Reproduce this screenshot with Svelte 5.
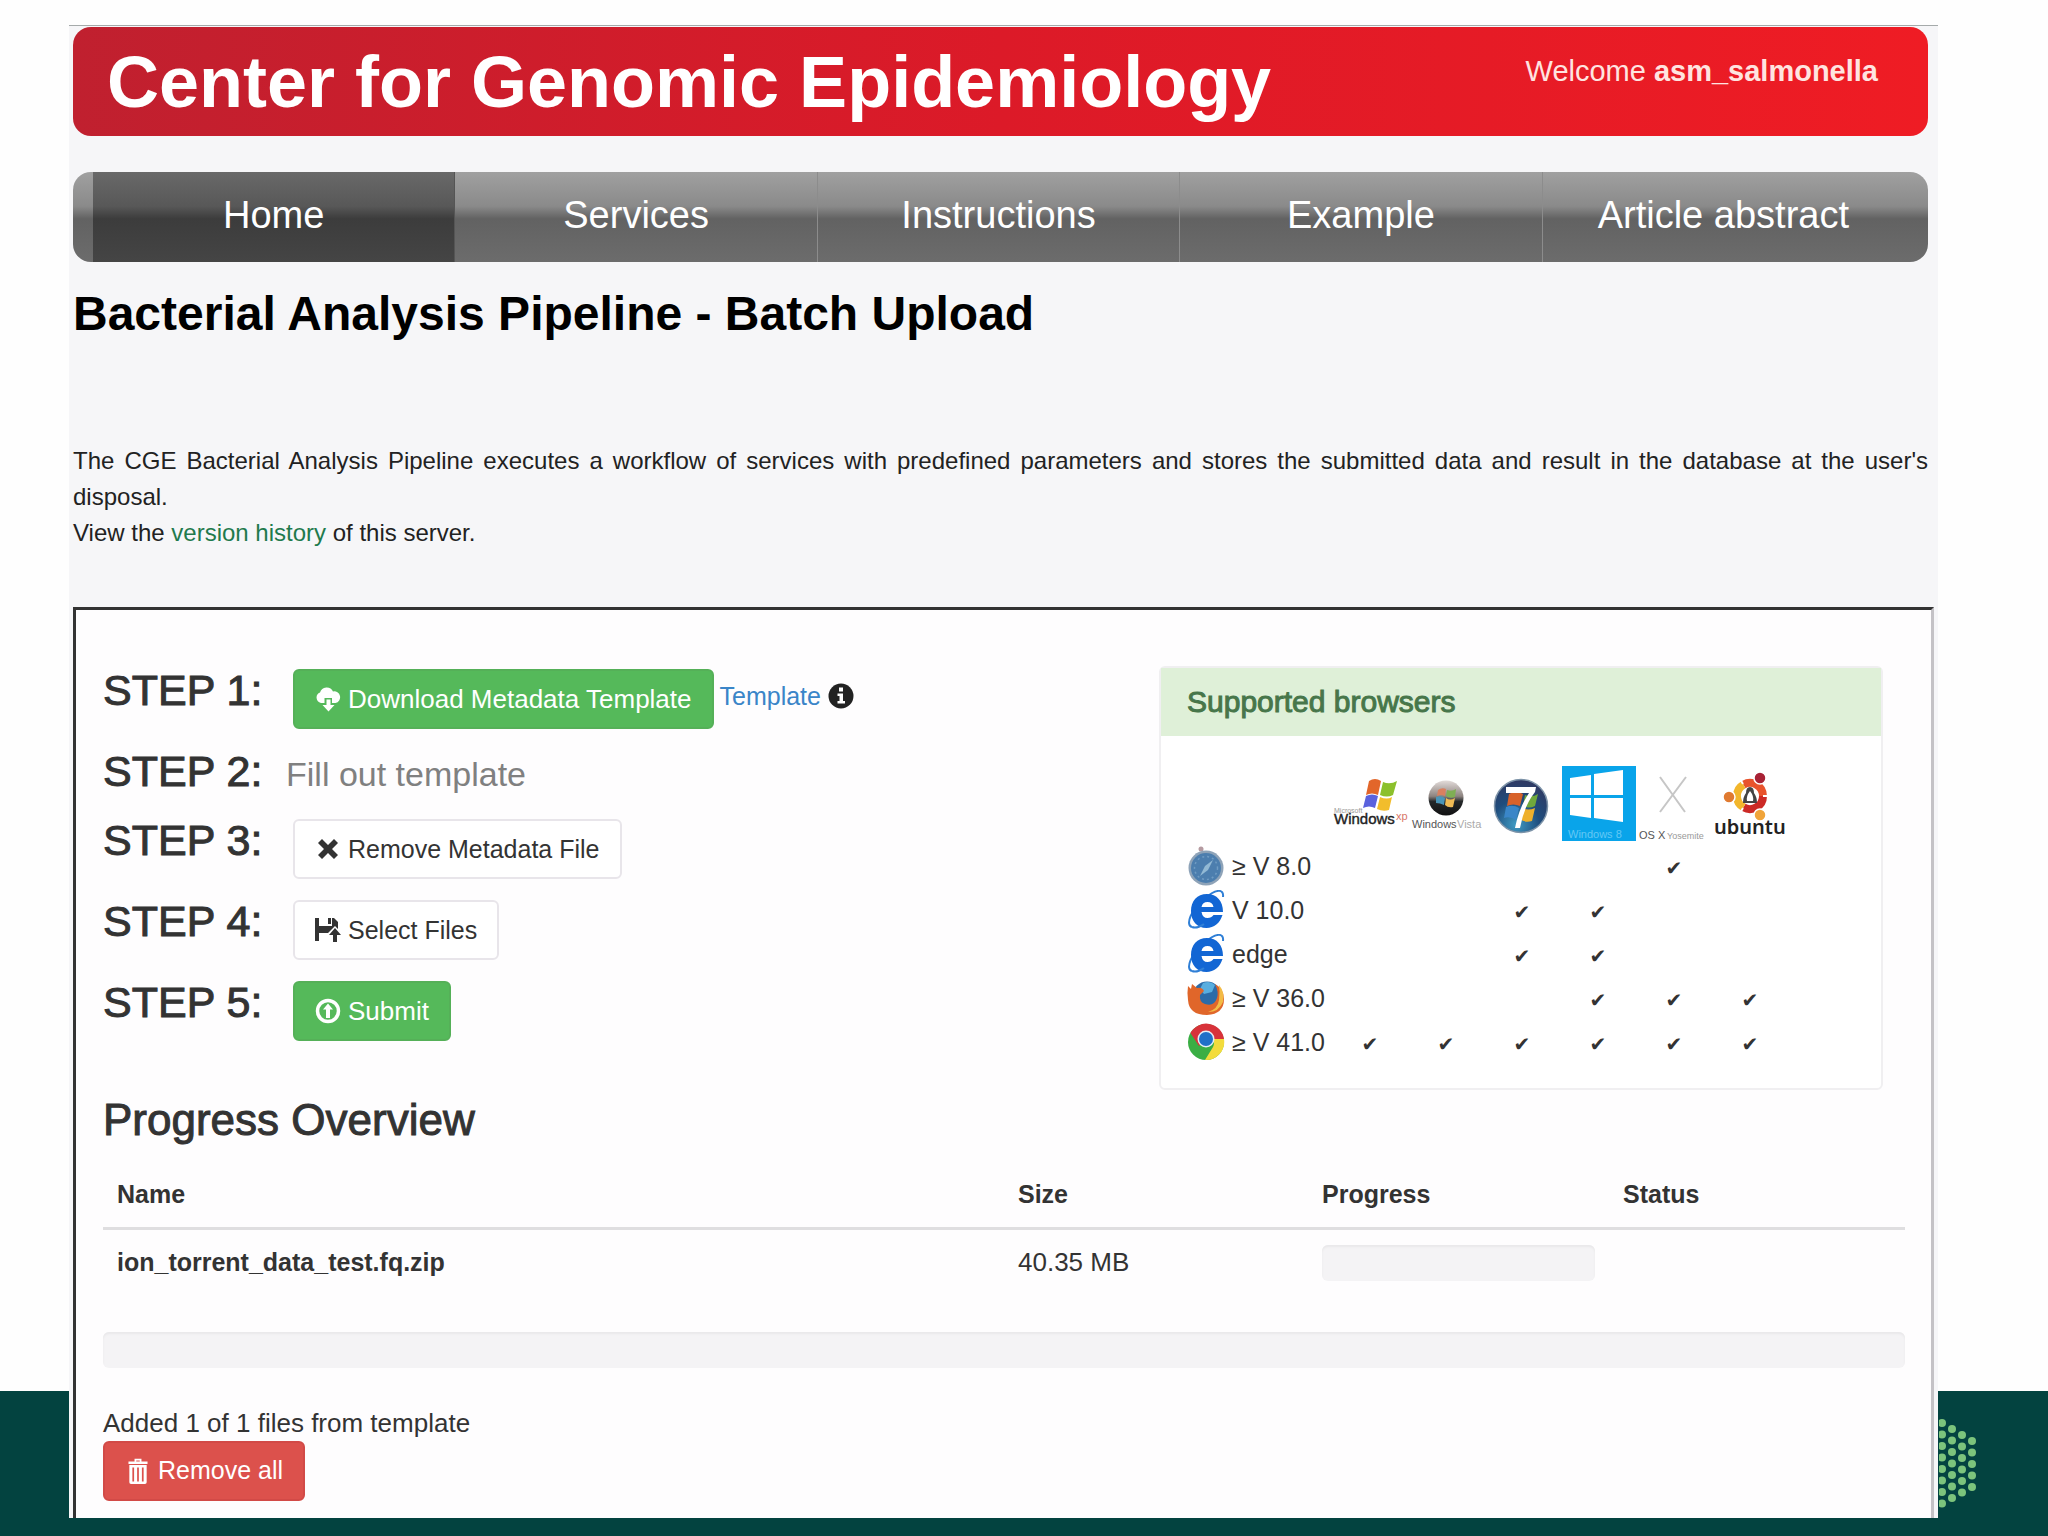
<script>
    const nav = ["Home", "Services", "Instructions", "Example", "Article abstract"];

    // one flag per operating system, in the order of the table head
    const browsers = [
        { icon: "safari", label: "≥ V 8.0", support: [0, 0, 0, 0, 1, 0] },
        { icon: "ie", label: "V 10.0", support: [0, 0, 1, 1, 0, 0] },
        { icon: "ie", label: "edge", support: [0, 0, 1, 1, 0, 0] },
        { icon: "firefox", label: "≥ V 36.0", support: [0, 0, 0, 1, 1, 1] },
        { icon: "chrome", label: "≥ V 41.0", support: [1, 1, 1, 1, 1, 1] },
    ];

    const files = [{ name: "ion_torrent_data_test.fq.zip", size: "40.35 MB", progress: 0 }];

    // columns of the hexagon: x, first y, number of dots
    const dots = [
        [3, 6, 8],
        [13, 12, 7],
        [23, 18, 6],
        [33, 24, 5],
    ].flatMap(([x, y, n]) => Array.from({ length: n }, (_, i) => ({ x, y: y + i * 11.5 })));
</script>

<div class="slide">
    <svg class="dots" viewBox="0 0 40 94" aria-hidden="true">
        {#each dots as dot}
            <circle cx={dot.x} cy={dot.y} r="4" />
        {/each}
    </svg>

    <div class="sheet">
        <header class="banner">
            <h1>Center for Genomic Epidemiology</h1>
            <div class="welcome">Welcome <b>asm_salmonella</b></div>
        </header>

        <nav>
            {#each nav as item, i}
                <a href="#{i}" class:active={i === 0}>{item}</a>
            {/each}
        </nav>

        <h2 class="title">Bacterial Analysis Pipeline - Batch Upload</h2>

        <p class="intro">
            The CGE Bacterial Analysis Pipeline executes a workflow of services with predefined
            parameters and stores the submitted data and result in the database at the user's
            disposal.<br />
            View the <a href="#history">version history</a> of this server.
        </p>

        <main>
            <div class="top">
                <div class="steps">
                    <div class="step">
                        <h3>STEP 1:</h3>
                        <button class="btn green">
                            <svg viewBox="0 0 26 26">
                                <path d="M6 17a5.5 5.5 0 0 1-1-10.5A7 7 0 0 1 18 5.5a5.8 5.8 0 0 1 2.5 11.5H17v-5H9.5v5z" />
                                <path d="M11.5 13.5h4V19h4l-6 6.5-6-6.5h4z" />
                            </svg>
                            Download Metadata Template
                        </button>
                        <a class="template" href="#template">
                            Template
                            <svg viewBox="0 0 26 26">
                                <circle cx="13" cy="13" r="12.5" fill="#222" />
                                <path d="M11 4.5h4v4h-4zM9.5 10.5H15V18h2v2.5H9.5V18h2v-5h-2z" fill="#fff" />
                            </svg>
                        </a>
                    </div>
                    <div class="step">
                        <h3>STEP 2:</h3>
                        <span class="hint">Fill out template</span>
                    </div>
                    <div class="step">
                        <h3>STEP 3:</h3>
                        <button class="btn">
                            <svg viewBox="0 0 26 26">
                                <path d="M3 7l4-4 6 6 6-6 4 4-6 6 6 6-4 4-6-6-6 6-4-4 6-6z" />
                            </svg>
                            Remove Metadata File
                        </button>
                    </div>
                    <div class="step">
                        <h3>STEP 4:</h3>
                        <button class="btn">
                            <svg viewBox="0 0 26 26">
                                <path d="M0 1h4v8h13V1h2l4 4v7l-3-3-7 7H4v8H0z" />
                                <path d="M13 1h3v6h-3zM20 11l6 7h-4v7h-4v-7h-4z" />
                            </svg>
                            Select Files
                        </button>
                    </div>
                    <div class="step">
                        <h3>STEP 5:</h3>
                        <button class="btn green">
                            <svg viewBox="0 0 26 26">
                                <circle cx="13" cy="13" r="10.5" fill="none" stroke="currentColor" stroke-width="3.5" />
                                <path d="M13 5.5l5 6h-3V20h-4v-8.5H8z" />
                            </svg>
                            Submit
                        </button>
                    </div>
                </div>

                <section class="browsers">
                    <h4>Supported browsers</h4>
                    <table>
                        <thead>
                            <tr>
                                <td></td>
                                <th scope="col">
                                    <svg class="os" viewBox="0 0 76 80">
                                        <path d="M37 17q6-4 12 0l-3 14q-6-3-12 0z" fill="#e2662a" />
                                        <path d="M51 18q7 3 14-1l-4 14q-6 3-13 0z" fill="#8cc02c" />
                                        <path d="M34 32q6-3 12 0l-3 12q-6-3-12 0z" fill="#5a62dd" />
                                        <path d="M48 33q7 3 12 0l-3 13q-6 2-12-1z" fill="#f2bd2c" />
                                        <text x="2" y="49" font-size="7" fill="#999">Microsoft</text>
                                        <text x="2" y="60" font-size="15" fill="#222" stroke="#222" stroke-width="0.4">Windows</text>
                                        <text x="64" y="56" font-size="11" fill="#d9776a">xp</text>
                                    </svg>
                                </th>
                                <th scope="col">
                                    <svg class="os" viewBox="0 0 76 80">
                                        <defs>
                                            <linearGradient id="vista" x1="0" y1="0" x2="0" y2="1">
                                                <stop offset="0" stop-color="#e3dcda" />
                                                <stop offset="0.45" stop-color="#8d8480" />
                                                <stop offset="0.6" stop-color="#25282a" />
                                                <stop offset="1" stop-color="#111" />
                                            </linearGradient>
                                        </defs>
                                        <circle cx="38" cy="34" r="17.5" fill="url(#vista)" />
                                        <path d="M30 26q4-3 8-1l-1 7q-4-2-8 0z" fill="#d9805f" />
                                        <path d="M39 26q5 2 9-1l-1 8q-5 2-9-1z" fill="#7fae54" />
                                        <path d="M28 33q5-2 9 1l-1 7q-4-2-8-2z" fill="#4a95b8" />
                                        <path d="M38 34q4 3 9 0l-2 9q-5 1-8-2z" fill="#f0bb55" />
                                        <text x="4" y="64" font-size="11" fill="#555">Windows</text>
                                        <text x="49" y="64" font-size="11" fill="#aaa">Vista</text>
                                    </svg>
                                </th>
                                <th scope="col">
                                    <svg class="os" viewBox="0 0 76 80">
                                        <defs>
                                            <radialGradient id="seven" cx="0.4" cy="0.85" r="0.9">
                                                <stop offset="0" stop-color="#3f9bc4" />
                                                <stop offset="0.5" stop-color="#1f4d7d" />
                                                <stop offset="1" stop-color="#33375f" />
                                            </radialGradient>
                                        </defs>
                                        <circle cx="37" cy="42" r="26.5" fill="url(#seven)" stroke="#7d93a8" stroke-width="1.5" />
                                        <path d="M25 30q7-4 14 0l-3 12q-7-3-13 0z" fill="#d8622a" />
                                        <path d="M41 31q7 3 13-1l-3 12q-6 3-12 0z" fill="#6fa83c" />
                                        <path d="M22 43q7-3 13 1l-3 12q-6-4-12-2z" fill="#3a86c8" />
                                        <path d="M38 44q6 3 13 0l-3 13q-7 2-12-2z" fill="#eeb02c" />
                                        <path d="M22 23h30l-1 5q-11 14-15 36h-5q4-20 14-35H22z" fill="#fff" />
                                    </svg>
                                </th>
                                <th scope="col">
                                    <svg class="os" viewBox="0 0 76 80">
                                        <rect x="2" y="2" width="74" height="75" fill="#09a4ea" />
                                        <path d="M10 14l21-3v20H10zM34 10l29-4v25H34zM10 34h21v20l-21-3zM34 34h29v24l-29-4z" fill="#fff" />
                                        <text x="8" y="74" font-size="11" fill="#63c8f5">Windows 8</text>
                                    </svg>
                                </th>
                                <th scope="col">
                                    <svg class="os" viewBox="0 0 76 80">
                                        <path d="M24 13l25 35M50 13L24 48" stroke="#c6c6c6" stroke-width="2" />
                                        <text x="3" y="75" font-size="11" fill="#555">OS X</text>
                                        <text x="31" y="75" font-size="9" fill="#999">Yosemite</text>
                                    </svg>
                                </th>
                                <th scope="col">
                                    <svg class="os" viewBox="0 0 76 80">
                                        <g fill="none" stroke-width="8">
                                            <path d="M31.5 20.7A13 13 0 0 1 51 32" stroke="#e8532c" />
                                            <path d="M51 32A13 13 0 0 1 31.5 43.3" stroke="#cc2a26" />
                                            <path d="M31.5 43.3A13 13 0 0 1 31.5 20.7" stroke="#f2b62c" />
                                        </g>
                                        <path d="M31 20l-3-5M31 44l-3 5M51 32h7" stroke="#fff" stroke-width="2" />
                                        <g stroke="#fff" stroke-width="1.5">
                                            <circle cx="17" cy="33" r="6" fill="#e07a30" />
                                            <circle cx="48" cy="14" r="6" fill="#a82235" />
                                            <circle cx="48" cy="51" r="6" fill="#f0a43a" />
                                        </g>
                                        <path d="M38 23q4 0 4 6 3 4 3 10H31q0-6 3-10 0-6 4-6z" fill="#444" />
                                        <path d="M38 27q4 5 3 10h-6q-1-5 3-10z" fill="#fff" />
                                        <text class="ubuntu" x="2" y="70" font-size="20" fill="#222">ubuntu</text>
                                    </svg>
                                </th>
                            </tr>
                        </thead>
                        <tbody>
                            {#each browsers as browser}
                                <tr>
                                    <th scope="row">
                                        <span>
                                            <svg viewBox="0 0 38 40">
                                                {#if browser.icon === "safari"}
                                                    <circle cx="14" cy="3" r="2.5" fill="#b59aa0" />
                                                    <circle cx="19" cy="22" r="17.5" fill="#8ea3b8" />
                                                    <circle cx="19" cy="22" r="15" fill="#4c7eae" />
                                                    <circle cx="19" cy="22" r="11.5" fill="none" stroke="#6f9bc2" stroke-width="1.5" stroke-dasharray="2 3" />
                                                    <path d="M26 14l-5 10-8 6 5-10z" fill="#92b9d4" />
                                                {:else if browser.icon === "ie"}
                                                    <path d="M5 37C-2 35 4 20 17 9S37-1 36 7" fill="none" stroke="#2f7fd6" stroke-width="2" />
                                                    <path
                                                        d="M20 4C30 4 36 11 36 22H14.5q1 6 6 6 4 0 6-3h9C33 33 27 38 19.5 38 10 38 4 31 4 21S10 4 20 4zM14.5 17h12q-1-5-6-5t-6 5z"
                                                        fill="#1266d4"
                                                        fill-rule="evenodd"
                                                    />
                                                    <path d="M5 37C10 39 14 36 17 34" fill="none" stroke="#2f7fd6" stroke-width="2" />
                                                {:else if browser.icon === "firefox"}
                                                    <circle cx="20" cy="18" r="14.5" fill="#2c6ba8" />
                                                    <path d="M16 5q7-3 12 2l-3 7-8 2-4-5z" fill="#58aee0" />
                                                    <path
                                                        d="M1 8l3 3 1-5 5 4q5-1 7 3l-4 4q-1 7 5 9 9 3 12-6 2-6-2-14 9 5 9 15 0 15-17 16Q2 37 1 22q-1-8 0-14z"
                                                        fill="#e0662a"
                                                    />
                                                    <path d="M32 7q6 7 4 17-4 10-15 10 10-3 11-12 1-8 0-15z" fill="#f3bb45" />
                                                {:else}
                                                    <circle cx="19" cy="20" r="18" fill="#3aae44" />
                                                    <path d="M3.4 11A18 18 0 0 1 37 17H19L12 24z" fill="#d8323a" />
                                                    <path d="M37 17a18 18 0 0 1-19 21l8-13q2-4 0-8z" fill="#f3dc3c" />
                                                    <circle cx="19" cy="17" r="8.5" fill="#e6eef5" />
                                                    <circle cx="19" cy="17" r="7" fill="#2070c8" />
                                                {/if}
                                            </svg>
                                            {browser.label}
                                        </span>
                                    </th>
                                    {#each browser.support as ok}
                                        <td class="check">{ok ? "✔" : ""}</td>
                                    {/each}
                                </tr>
                            {/each}
                        </tbody>
                    </table>
                </section>
            </div>

            <h3 class="overview">Progress Overview</h3>

            <table class="files">
                <thead>
                    <tr>
                        <th class="name">Name</th>
                        <th class="size">Size</th>
                        <th class="progress">Progress</th>
                        <th>Status</th>
                    </tr>
                </thead>
                <tbody>
                    {#each files as file}
                        <tr>
                            <td><b>{file.name}</b></td>
                            <td>{file.size}</td>
                            <td><div class="bar"><div class="fill" style="width: {file.progress}%"></div></div></td>
                            <td></td>
                        </tr>
                    {/each}
                </tbody>
            </table>

            <div class="bar total"></div>

            <div class="added">Added 1 of 1 files from template</div>
            <button class="btn red">
                <svg viewBox="0 0 26 30">
                    <path d="M9 4V1h8v3h7v3H2V4zM11 4h4V3h-4z" />
                    <path d="M3 8h20v20q0 2-2 2H5q-2 0-2-2zM6.5 11v16h2V11zM12 11v16h2V11zM17.5 11v16h2V11z" fill-rule="evenodd" />
                </svg>
                Remove all
            </button>
        </main>
    </div>
</div>

<style>
    :global(body) {
        margin: 0;
    }
    .slide {
        position: relative;
        box-sizing: border-box;
        min-height: 100vh;
        padding: 25px 110px 18px 69px;
        background: linear-gradient(to top, #034340 145px, #fefefe 145px);
        font-family: "Liberation Sans", Arial, sans-serif;
        font-size: 26px;
        color: #333;
    }
    .dots {
        position: absolute;
        right: 69px;
        bottom: 25px;
        width: 40px;
        height: 94px;
        fill: #7cc47c;
    }
    .sheet {
        position: relative;
        padding: 1px 10px 0 4px;
        background: #f6f6f8;
        border-top: 1px solid #a5aaaa;
    }
    h1,
    h2,
    h3,
    h4,
    p {
        margin: 0;
    }
    .banner {
        display: flex;
        justify-content: space-between;
        align-items: flex-start;
        height: 109px;
        padding: 0 50px 0 34px;
        border-radius: 18px;
        background: linear-gradient(to right, #c0202f, #dc1a28 50%, #ef1c24);
        color: #fff;
    }
    h1 {
        font-size: 72px;
        line-height: 110px;
    }
    .welcome {
        font-size: 29px;
        line-height: 88px;
        color: #ffe4e0;
    }
    nav {
        display: flex;
        height: 90px;
        margin: 36px 0 24px;
        padding: 0 24px 0 20px;
        border-radius: 18px;
        background: linear-gradient(#a0a0a0, #8a8a8a 38%, #626262 52%, #6c6c6c);
        overflow: hidden;
    }
    nav a {
        flex: 1;
        border-right: 1px solid #8c8c8c;
        color: #fff;
        font-size: 38px;
        line-height: 86px;
        text-align: center;
        text-decoration: none;
    }
    nav a:last-child {
        border-right: none;
    }
    nav a.active {
        background: linear-gradient(#696969, #585858 38%, #3c3c3c 52%, #454545);
        border-right-color: #555;
    }
    .title {
        font-size: 48px;
        line-height: 56px;
        color: #000;
    }
    .intro {
        padding: 101px 0 56px;
        font-size: 24px;
        line-height: 36px;
        text-align: justify;
        color: #222;
    }
    .intro a {
        color: #1f7a4d;
        text-decoration: none;
    }
    main {
        margin-right: -6px;
        padding: 56px 26px 17px 27px;
        border: solid #333;
        border-width: 3px 3px 0;
        border-right-color: #c4c2c6;
        background: #fefdfe;
    }
    .top {
        display: flex;
        justify-content: space-between;
        align-items: flex-start;
    }
    .steps {
        display: grid;
        gap: 21px;
        padding-top: 3px;
    }
    .step {
        display: flex;
        align-items: flex-start;
    }
    h3 {
        font-size: 44px;
        font-weight: normal;
        line-height: 42px;
        -webkit-text-stroke: 1px #333;
    }
    .step h3 {
        width: 190px;
        font-size: 43px;
    }
    .hint {
        margin-left: -7px;
        font-size: 34px;
        line-height: 48px;
        color: #808080;
    }
    .btn {
        display: flex;
        align-items: center;
        gap: 7px;
        height: 60px;
        padding: 0 20px;
        border: 2px solid #e8e5ea;
        border-radius: 6px;
        background: #fff;
        color: #333;
        font: 25px "Liberation Sans", Arial, sans-serif;
    }
    .btn svg {
        width: 26px;
        height: 26px;
        fill: currentColor;
    }
    .btn.green {
        background: #55b95a;
        border-color: #55b058;
        color: #fff;
        font-size: 26px;
    }
    .btn.red {
        background: #dc514c;
        border-color: #d24a47;
        color: #fff;
    }
    .template {
        display: flex;
        align-items: center;
        gap: 7px;
        margin-left: 6px;
        font-size: 25px;
        line-height: 54px;
        color: #3a85c8;
        text-decoration: none;
    }
    .template svg {
        width: 26px;
        height: 26px;
    }
    .browsers {
        width: 720px;
        margin-right: 22px;
        padding-bottom: 24px;
        border: 2px solid #f0eff1;
        border-radius: 6px;
        background: #fff;
    }
    h4 {
        padding: 0 26px;
        font-size: 30px;
        font-weight: normal;
        line-height: 68px;
        color: #47764a;
        background: #dff0d8;
        -webkit-text-stroke: 1px #47764a;
    }
    .browsers table {
        margin: 28px 0 0 26px;
        border-collapse: collapse;
    }
    .browsers th,
    .browsers td {
        padding: 0;
        font-weight: normal;
    }
    .browsers tbody tr {
        height: 44px;
    }
    .browsers th[scope="row"] {
        width: 145px;
        font-size: 25px;
        white-space: nowrap;
    }
    .browsers th span {
        display: flex;
        align-items: center;
        gap: 7px;
    }
    .browsers th span svg {
        width: 38px;
        height: 40px;
    }
    .os {
        display: block;
        width: 76px;
        height: 80px;
        overflow: visible;
    }
    .ubuntu {
        font-family: "Noto Sans", sans-serif;
        font-weight: 600;
    }
    .browsers .check {
        width: 76px;
        padding-top: 4px;
        font-family: "DejaVu Sans", sans-serif;
        font-size: 20px;
        line-height: 36px;
        text-align: center;
    }
    .overview {
        margin: 9px 0 29px;
    }
    .files {
        width: 100%;
        table-layout: fixed;
        border-collapse: collapse;
        text-align: left;
    }
    .files th,
    .files td {
        box-sizing: border-box;
        padding: 15px 14px 16px;
    }
    .files th {
        height: 58px;
        padding: 5px 14px 12px;
        border-bottom: 3px solid #dfdee0;
        font-size: 25px;
    }
    .files b {
        font-size: 25px;
    }
    .files .name {
        width: 50%;
    }
    .files .size {
        width: 304px;
    }
    .files .progress {
        width: 301px;
    }
    .bar {
        height: 36px;
        border-radius: 6px;
        background: #f4f3f5;
        box-shadow: inset 0 2px 2px #e9e8ea;
    }
    .fill {
        height: 100%;
        background: #337ab7;
    }
    .total {
        margin: 35px 0 37px;
    }
    .added {
        line-height: 36px;
    }
</style>
